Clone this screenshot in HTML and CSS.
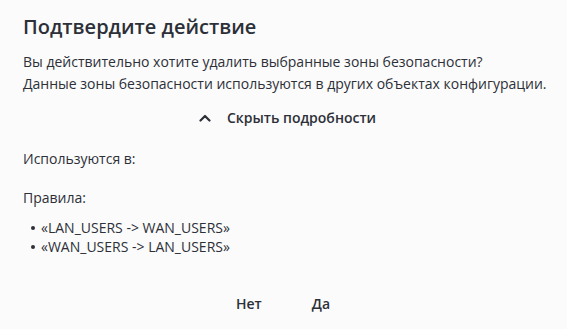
FILE: index.html
```html
<!DOCTYPE html>
<html lang="ru">
<head>
<meta charset="utf-8">
<link rel="stylesheet" href="styles.css">
</head>
<body>
<div class="dialog">
  <h1 class="title">Подтвердите действие</h1>
  <p class="message">Вы действительно хотите удалить выбранные зоны безопасности?<br>Данные зоны безопасности используются в других объектах конфигурации.</p>
  <div class="toggle-row">
    <button class="toggle">
      <svg class="chev" width="12" height="8" viewBox="0 0 12 8"><path d="M1.5 6.5 L6 2 L10.5 6.5" fill="none" stroke="#2d3038" stroke-width="2.2" stroke-linecap="round" stroke-linejoin="round"/></svg>
      <span>Скрыть подробности</span>
    </button>
  </div>
  <div class="details">
    <p class="used">Используются в:</p>
    <p class="group">Правила:</p>
    <ul class="list">
      <li>«LAN_USERS -&gt; WAN_USERS»</li>
      <li>«WAN_USERS -&gt; LAN_USERS»</li>
    </ul>
  </div>
  <div class="actions">
    <button class="btn">Нет</button>
    <button class="btn">Да</button>
  </div>
</div>
</body>
</html>
```
FILE: styles.css
```css
html, body {
  margin: 0;
  padding: 0;
  background: #fbfbfb;
}
body {
  font-family: "Open Sans", "Noto Sans", sans-serif;
  color: #2d3038;
}
.dialog {
  width: 567px;
  height: 329px;
  box-sizing: border-box;
  padding: 13px 10px 0 23px;
  display: flex;
  flex-direction: column;
}
.title {
  margin: 0;
  font-size: 20px;
  font-weight: 600;
  line-height: 28px;
}
.message {
  margin: 10px 0 0 0;
  font-size: 14px;
  line-height: 22px;
  white-space: nowrap;
}
.toggle-row {
  display: flex;
  justify-content: center;
  margin-top: 12px;
}
.toggle {
  display: flex;
  align-items: center;
  gap: 16px;
  border: 0;
  background: none;
  font-family: inherit;
  font-size: 14px;
  font-weight: 600;
  color: #2d3038;
  padding: 0;
  line-height: 22px;
  margin-left: 8px;
  margin-right: 13px;
}
.details {
  font-size: 14px;
  line-height: 20px;
}
.used {
  margin: 20px 0 0 0;
}
.group {
  margin: 19px 0 0 0;
}
.list {
  margin: 10px 0 0 0;
  padding-left: 8px;
  list-style: none;
}
.list li {
  line-height: 19px;
  display: flex;
  align-items: center;
  gap: 6px;
}
.list li::before {
  content: "";
  width: 4px;
  height: 4px;
  border-radius: 50%;
  background: #2d3038;
  flex: none;
}
.actions {
  display: flex;
  justify-content: center;
  gap: 50px;
  margin-top: 38px;
  margin-right: 14px;
}
.btn {
  border: 0;
  background: none;
  padding: 0;
  font-family: inherit;
  font-size: 14px;
  font-weight: 600;
  color: #2d3038;
  line-height: 20px;
}
```
